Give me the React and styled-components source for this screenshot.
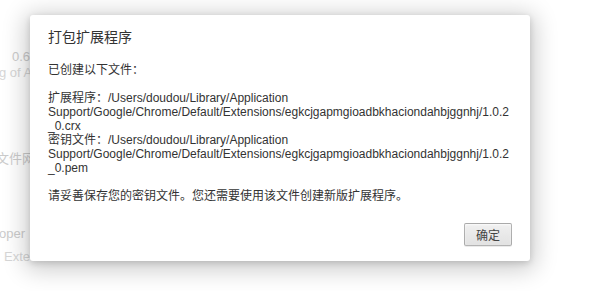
import React from "react";
import styled, { createGlobalStyle } from "styled-components";

const GlobalStyle = createGlobalStyle`
    html, body {
        margin: 0;
        padding: 0;
        background: #fff;
    }
    body {
        font-family: "Liberation Sans", "Noto Sans CJK SC", sans-serif;
    }
`;

const Screen = styled.div`
    position: relative;
    width: 604px;
    height: 291px;
    overflow: hidden;
`;

const Page = styled.div`
    display: flex;
    flex-direction: column;
    font-size: 13px;
    line-height: 15px;
    color: #c6c6c6;
    white-space: nowrap;
`;

const PageLine = styled.div`
    margin-top: ${(props) => props.top}px;
    margin-left: ${(props) => props.left}px;
    color: ${(props) => props.color || "#c6c6c6"};
`;

const Overlay = styled.div`
    position: absolute;
    inset: 0;
    background: rgba(255, 255, 255, 0.1);
    padding: 15px 0 0 30px;
`;

const Dialog = styled.div`
    width: 500px;
    height: 246px;
    box-sizing: border-box;
    background: #fff;
    border-radius: 3px;
    box-shadow: 0 4px 23px 5px rgba(0, 0, 0, 0.2),
        0 2px 6px rgba(0, 0, 0, 0.15);
    display: flex;
    flex-direction: column;
    padding: 0 18px 15px 18px;
    color: #333;
`;

const Title = styled.h1`
    margin: 0;
    padding-top: 13px;
    font-size: 14px;
    font-weight: normal;
    line-height: 18px;
    color: #333;
`;

const Body = styled.div`
    flex: 1;
    padding-top: 17px;
    font-size: 12px;
    line-height: 14px;
`;

const Paragraph = styled.p`
    margin: 0 0 14px 0;
`;

const Footer = styled.div`
    display: flex;
    justify-content: flex-end;
`;

const Button = styled.button`
    width: 48px;
    height: 23px;
    padding: 0;
    font-family: inherit;
    font-size: 12px;
    color: #444;
    border: 1px solid rgba(0, 0, 0, 0.25);
    border-radius: 2px;
    background: linear-gradient(#f0f0f0, #e2e2e2);
    box-shadow: 0 1px 0 rgba(0, 0, 0, 0.08),
        inset 0 1px 2px rgba(255, 255, 255, 0.75);
`;

export default function App() {
    return (
        <Screen>
            <GlobalStyle />
            <Page>
                <PageLine top={49} left={12}>0.6</PageLine>
                <PageLine top={1} left={-1} color="#d2d2d2">g of A</PageLine>
                <PageLine top={71} left={-4}>文件网</PageLine>
                <PageLine top={60} left={-1}>oper</PageLine>
                <PageLine top={8} left={4} color="#d2d2d2">Exte</PageLine>
            </Page>
            <Overlay>
                <Dialog>
                    <Title>打包扩展程序</Title>
                    <Body>
                        <Paragraph>已创建以下文件：</Paragraph>
                        <Paragraph>
                            扩展程序：/Users/doudou/Library/Application
                            <br />
                            Support/Google/Chrome/Default/Extensions/egkcjgapmgioadbkhaciondahbjggnhj/1.0.2
                            <br />
                            _0.crx
                            <br />
                            密钥文件：/Users/doudou/Library/Application
                            <br />
                            Support/Google/Chrome/Default/Extensions/egkcjgapmgioadbkhaciondahbjggnhj/1.0.2
                            <br />
                            _0.pem
                        </Paragraph>
                        <Paragraph>
                            请妥善保存您的密钥文件。您还需要使用该文件创建新版扩展程序。
                        </Paragraph>
                    </Body>
                    <Footer>
                        <Button>确定</Button>
                    </Footer>
                </Dialog>
            </Overlay>
        </Screen>
    );
}
